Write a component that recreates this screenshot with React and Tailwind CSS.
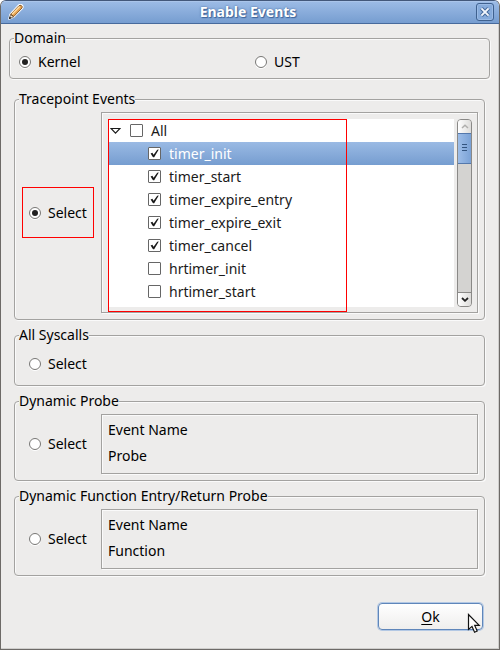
import { useState } from "react";

const EVENTS = [
  { name: "timer_init", on: true },
  { name: "timer_start", on: true },
  { name: "timer_expire_entry", on: true },
  { name: "timer_expire_exit", on: true },
  { name: "timer_cancel", on: true },
  { name: "hrtimer_init", on: false },
  { name: "hrtimer_start", on: false },
];

function Radio({ label, name, checked, onChange }) {
  return (
    <label className="flex items-center gap-[7px]">
      <span className="grid size-3 place-items-center">
        <input
          type="radio"
          name={name}
          checked={checked}
          onChange={onChange}
          className="peer col-start-1 row-start-1 size-3 appearance-none rounded-full border border-[#777674] bg-white shadow-[0_1px_0_#fff]"
        />
        <span className="pointer-events-none col-start-1 row-start-1 hidden size-[6px] rounded-full bg-[#222] peer-checked:block" />
      </span>
      <span>{label}</span>
    </label>
  );
}

function Check({ label, checked, onChange, selected }) {
  return (
    <label className="flex h-[23px] items-center gap-2">
      <span className="grid size-[13px]">
        <input
          type="checkbox"
          checked={checked}
          onChange={onChange}
          className="peer col-start-1 row-start-1 size-[13px] appearance-none rounded-[1px] border border-[#666] bg-white"
        />
        <svg
          viewBox="0 0 13 13"
          className="pointer-events-none col-start-1 row-start-1 hidden size-[13px] peer-checked:block"
          aria-hidden="true"
        >
          <path d="M2.6 6.4 L4.4 5.8 L5.6 7.8 L9.2 2.8 L10.8 2.6 L6.2 10.2 L5 10.2 Z" fill="#1a1a1a" />
        </svg>
      </span>
      <span className={selected ? "text-white" : "text-[#1a1a1a]"}>{label}</span>
    </label>
  );
}

function Group({ title, className, children }) {
  return (
    <fieldset className="min-w-0 rounded-[4px] border border-[#a3a2a0] shadow-[1px_1px_0_#fafafa,inset_1px_1px_0_#fafafa]">
      <legend className="ml-1 bg-[#edeceb]">{title}</legend>
      <div className={className}>{children}</div>
    </fieldset>
  );
}

function Panel({ className, children }) {
  return (
    <div
      className={
        "min-w-0 flex-1 border border-[#a3a2a0] pl-[6px] shadow-[1px_1px_0_#fafafa,inset_1px_1px_0_#fafafa] " + className
      }
    >
      {children}
    </div>
  );
}

function ProbeGroup({ title, fields, checked, onChange }) {
  return (
    <Group title={title} className="pt-[3px] pr-[6px] pb-[6px] pl-[7px]">
      <div className="flex items-center gap-[7px]">
        <div className="w-[72px] px-[7px]">
          <Radio label="Select" name="mode" checked={checked} onChange={onChange} />
        </div>
        <Panel className="flex flex-col gap-[6px] pt-[5px] pb-[7px]">
          {fields.map((f) => (
            <span key={f}>{f}</span>
          ))}
        </Panel>
      </div>
    </Group>
  );
}

function ScrollBar() {
  return (
    <div className="flex w-[15px] flex-col overflow-hidden rounded-[4px] border border-[#8a8987] bg-[#d4d3d1]">
      <button
        type="button"
        aria-label="Scroll up"
        className="grid h-[13px] place-items-center bg-gradient-to-r from-white to-[#dddcda]"
      >
        <svg width="8" height="5" viewBox="0 0 8 5" aria-hidden="true">
          <path d="M1 4 L4 1.2 L7 4" fill="none" stroke="#b0afad" strokeWidth="1.5" />
        </svg>
      </button>
      <div className="-mx-px flex h-[31px] flex-col items-center justify-center gap-[2px] border border-[#5478ac] bg-gradient-to-r from-[#9dbde8] to-[#7ba2d6] pb-[2px]">
        <span className="h-px w-[5px] bg-[#33547f]" />
        <span className="h-px w-[5px] bg-[#33547f]" />
        <span className="h-px w-[5px] bg-[#33547f]" />
      </div>
      <div className="flex-1" />
      <button
        type="button"
        aria-label="Scroll down"
        className="grid h-[14px] place-items-center border-t border-[#8a8987] bg-gradient-to-r from-white to-[#dddcda]"
      >
        <svg width="8" height="5" viewBox="0 0 8 5" aria-hidden="true">
          <path d="M1 1 L4 3.8 L7 1" fill="none" stroke="#222" strokeWidth="1.8" />
        </svg>
      </button>
    </div>
  );
}

function Pencil() {
  return (
    <svg width="16" height="16" viewBox="0 0 16 16" aria-hidden="true">
      <path d="M1 15 L2.2 10.2 L10.6 1.4 Q12 0.2 13.6 1 Q15.6 2.2 14.4 4.2 L6 12.8 Z" fill="#7a4a1c" stroke="#fff" strokeWidth="1.6" strokeLinejoin="round" />
      <path d="M1.4 14.6 L2.6 10.4 L5.6 12.8 Z" fill="#f6e8d0" stroke="#4d3a2a" strokeWidth="0.7" />
      <path d="M2.8 10.2 L10.8 1.9 Q12 0.8 13.3 1.5 Q14.9 2.6 14 4 L5.8 12.5 Z" fill="#e9a551" stroke="#6b421d" strokeWidth="0.8" />
      <path d="M4 10.2 L11.6 2.4" stroke="#ffdfa6" strokeWidth="1.4" />
      <path d="M1 15 L1.6 12.6 L3.4 14.2 Z" fill="#111" />
    </svg>
  );
}

export default function App() {
  const [domain, setDomain] = useState("kernel");
  const [mode, setMode] = useState("tracepoint");
  const [events, setEvents] = useState(EVENTS);
  const [all, setAll] = useState(false);

  const toggle = (i) => setEvents(events.map((e, j) => (j === i ? { ...e, on: !e.on } : e)));

  return (
    <div className="bg-white font-['Noto_Sans',sans-serif] text-[14px] leading-[20px] text-black">
      <main className="flex min-h-screen flex-col overflow-hidden rounded-t-[6px] border border-[#6d6a67] border-t-[#43587a] bg-[#edeceb]">
        <header className="flex h-[23px] items-center border-b border-[#476a9c] bg-gradient-to-b from-[#9dbce6] to-[#769dd0] pr-[5px] pl-[7px] shadow-[inset_0_1px_0_#aac5ea]">
          <Pencil />
          <h1 className="flex-1 pr-1 text-center font-bold text-white [text-shadow:0_0_2px_#3d649a,1px_1px_1px_#3d649a]">
            Enable Events
          </h1>
          <button
            type="button"
            aria-label="Close"
            className="grid size-[18px] place-items-center rounded-[3px] border border-[#3f618f] bg-[#86abdb] shadow-[inset_0_0_0_1px_#9bbbe5]"
          >
            <svg width="12" height="12" viewBox="0 0 12 12" aria-hidden="true">
              <path d="M2.4 2.4 L9.6 9.6 M9.6 2.4 L2.4 9.6" stroke="#466a9c" strokeWidth="4" />
              <path d="M2.4 2.4 L9.6 9.6 M9.6 2.4 L2.4 9.6" stroke="#f2f6fc" strokeWidth="2" />
            </svg>
          </button>
        </header>

        <div className="flex flex-1 flex-col border-r border-b border-[#cfcecc] px-2 pt-1">
          <Group title="Domain" className="pt-1 pb-[6px] pl-[9px]">
            <div className="grid grid-cols-2 gap-[2px]">
              <Radio label="Kernel" name="domain" checked={domain === "kernel"} onChange={() => setDomain("kernel")} />
              <Radio label="UST" name="domain" checked={domain === "ust"} onChange={() => setDomain("ust")} />
            </div>
          </Group>

          <div className="flex flex-col gap-[5px] px-[5px] pt-[10px]">
            <Group title="Tracepoint Events" className="pt-[3px] pr-[6px] pb-[6px] pl-[7px]">
              <div className="flex items-center gap-[7px]">
                <div className="flex h-[51px] w-[72px] items-center border border-[#f00] px-[6px]">
                  <Radio
                    label="Select"
                    name="mode"
                    checked={mode === "tracepoint"}
                    onChange={() => setMode("tracepoint")}
                  />
                </div>
                <Panel className="relative flex gap-[3px] pt-[6px] pr-[5px] pb-[5px]">
                  <div className="min-w-0 flex-1 bg-white pb-1">
                    <div className="flex items-center gap-[9px] pl-[2px]">
                      <svg width="11" height="8" viewBox="0 0 11 8" aria-hidden="true">
                        <path d="M1 1.5 H10 L5.5 6.2 Z" fill="#fff" stroke="#1a1a1a" strokeWidth="1.2" />
                      </svg>
                      <Check label="All" checked={all} onChange={() => setAll(!all)} />
                    </div>
                    {events.map((e, i) => (
                      <div
                        key={e.name}
                        className={"pl-10 " + (i === 0 ? "bg-gradient-to-b from-[#9abae4] to-[#769dd0]" : "")}
                      >
                        <Check label={e.name} checked={e.on} selected={i === 0} onChange={() => toggle(i)} />
                      </div>
                    ))}
                  </div>
                  <ScrollBar />
                  <div className="pointer-events-none absolute top-[6px] bottom-0 left-[6px] w-[239px] border border-[#f00]" />
                </Panel>
              </div>
            </Group>

            <Group title="All Syscalls" className="pt-[9px] pb-[11px] pl-[14px]">
              <Radio label="Select" name="mode" checked={mode === "syscalls"} onChange={() => setMode("syscalls")} />
            </Group>

            <ProbeGroup
              title="Dynamic Probe"
              fields={["Event Name", "Probe"]}
              checked={mode === "probe"}
              onChange={() => setMode("probe")}
            />
            <ProbeGroup
              title="Dynamic Function Entry/Return Probe"
              fields={["Event Name", "Function"]}
              checked={mode === "function"}
              onChange={() => setMode("function")}
            />
          </div>

          <footer className="mt-auto flex justify-end pr-[7px] pb-[18px]">
            <button
              type="button"
              className="relative h-[27px] w-[105px] rounded-[4px] border border-[#5f86ba] bg-gradient-to-b from-white to-[#efeeed] shadow-[0_0_0_1px_#b3c8e4]"
            >
              <span className="underline underline-offset-2">O</span>k
              <svg
                className="pointer-events-none absolute top-[9px] left-[88px]"
                width="15"
                height="22"
                viewBox="0 0 15 22"
                aria-hidden="true"
              >
                <path
                  d="M1.5 1.5 V16.5 L5 13.4 L7.6 19.2 L10.2 18 L7.7 12.4 H12.2 Z"
                  fill="#fff"
                  stroke="#111"
                  strokeWidth="1.2"
                />
              </svg>
            </button>
          </footer>
        </div>
      </main>
    </div>
  );
}
